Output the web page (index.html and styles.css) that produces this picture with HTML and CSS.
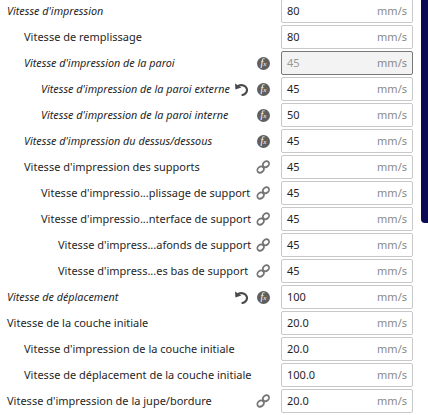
FILE: index.html
```html
<!DOCTYPE html>
<html lang="fr">
  <head>
    <meta charset="UTF-8" />
    <title>Vitesse</title>
    <link rel="stylesheet" href="styles.css">
  </head>
  <body>
    <svg class="defs" width="0" height="0">
      <symbol id="reset" viewBox="0 0 14 14">
        <path d="M1 1.4 L1.4 7.6 L7.4 5.4 Z" fill="#4a4a4a"/>
        <path d="M3 4.8 C6 2.2 11.6 2.6 12.8 6.8 C13.6 10 11.2 12.6 7.6 13.2" fill="none" stroke="#4a4a4a" stroke-width="2.1"/>
      </symbol>
      <symbol id="link" viewBox="0 0 14 14">
        <g fill="none" stroke="#737373" stroke-width="1.7">
          <ellipse cx="4.6" cy="9.6" rx="3.5" ry="2.8" transform="rotate(-40 4.6 9.6)"/>
          <ellipse cx="10" cy="4.2" rx="3.3" ry="2.7" transform="rotate(-40 10 4.2)"/>
        </g>
      </symbol>
    </svg>

    <main class="settings">
      <div class="row">
        <span class="label italic">Vitesse d'impression</span>
        <div class="field"><span>80</span><span class="unit">mm/s</span></div>
      </div>
      <div class="row level-1">
        <span class="label">Vitesse de remplissage</span>
        <div class="field"><span>80</span><span class="unit">mm/s</span></div>
      </div>
      <div class="row level-1">
        <span class="label italic">Vitesse d'impression de la paroi</span>
        <span class="fx"><i>f<small>x</small></i></span>
        <div class="field disabled"><span>45</span><span class="unit">mm/s</span></div>
      </div>
      <div class="row level-2">
        <span class="label italic">Vitesse d'impression de la paroi externe</span>
        <svg class="reset"><use href="#reset"/></svg>
        <span class="fx"><i>f<small>x</small></i></span>
        <div class="field"><span>45</span><span class="unit">mm/s</span></div>
      </div>
      <div class="row level-2">
        <span class="label italic">Vitesse d'impression de la paroi interne</span>
        <span class="fx"><i>f<small>x</small></i></span>
        <div class="field"><span>50</span><span class="unit">mm/s</span></div>
      </div>
      <div class="row level-1">
        <span class="label italic">Vitesse d'impression du dessus/dessous</span>
        <span class="fx"><i>f<small>x</small></i></span>
        <div class="field"><span>45</span><span class="unit">mm/s</span></div>
      </div>
      <div class="row level-1">
        <span class="label">Vitesse d'impression des supports</span>
        <svg class="link"><use href="#link"/></svg>
        <div class="field"><span>45</span><span class="unit">mm/s</span></div>
      </div>
      <div class="row level-2">
        <span class="label">Vitesse d'impressio...plissage de support</span>
        <svg class="link"><use href="#link"/></svg>
        <div class="field"><span>45</span><span class="unit">mm/s</span></div>
      </div>
      <div class="row level-2">
        <span class="label">Vitesse d'impressio...nterface de support</span>
        <svg class="link"><use href="#link"/></svg>
        <div class="field"><span>45</span><span class="unit">mm/s</span></div>
      </div>
      <div class="row level-3">
        <span class="label">Vitesse d'impress...afonds de support</span>
        <svg class="link"><use href="#link"/></svg>
        <div class="field"><span>45</span><span class="unit">mm/s</span></div>
      </div>
      <div class="row level-3">
        <span class="label">Vitesse d'impress...es bas de support</span>
        <svg class="link"><use href="#link"/></svg>
        <div class="field"><span>45</span><span class="unit">mm/s</span></div>
      </div>
      <div class="row">
        <span class="label italic">Vitesse de déplacement</span>
        <svg class="reset"><use href="#reset"/></svg>
        <span class="fx"><i>f<small>x</small></i></span>
        <div class="field"><span>100</span><span class="unit">mm/s</span></div>
      </div>
      <div class="row">
        <span class="label">Vitesse de la couche initiale</span>
        <div class="field"><span>20.0</span><span class="unit">mm/s</span></div>
      </div>
      <div class="row level-1">
        <span class="label">Vitesse d'impression de la couche initiale</span>
        <div class="field"><span>20.0</span><span class="unit">mm/s</span></div>
      </div>
      <div class="row level-1">
        <span class="label">Vitesse de déplacement de la couche initiale</span>
        <div class="field"><span>100.0</span><span class="unit">mm/s</span></div>
      </div>
      <div class="row">
        <span class="label">Vitesse d'impression de la jupe/bordure</span>
        <svg class="link"><use href="#link"/></svg>
        <div class="field"><span>20.0</span><span class="unit">mm/s</span></div>
      </div>
    </main>

    <div class="scrollbar"></div>
  </body>
</html>
```

FILE: styles.css
```css
html {
  height: 100%;
}

body {
  height: 415px;
  margin: 0;
  overflow: hidden;
  position: relative;
  background-color: white;
  font-family: "Noto Sans", sans-serif;
  font-size: 11px;
  color: #1f1f1f;
}

.defs {
  position: absolute;
}

.settings {
  display: flex;
  flex-direction: column;
  gap: 2px;
  width: 413px;
  margin-top: -1px;
}

.row {
  display: flex;
  align-items: center;
  height: 24px;
  padding-left: 7px;
}

.level-1 {
  padding-left: 24px;
}

.level-2 {
  padding-left: 41px;
}

.level-3 {
  padding-left: 58px;
}

.label {
  flex: 1;
  padding-bottom: 2px;
  white-space: nowrap;
}

.italic {
  font-style: italic;
  font-size: 10.8px;
}

.fx {
  display: flex;
  justify-content: center;
  align-items: center;
  width: 13px;
  height: 13px;
  margin-right: 11px;
  border-radius: 50%;
  background-color: #5f5f5f;
  color: white;
  font-family: "Liberation Serif", serif;
  font-size: 10px;
  line-height: 1;
}

.fx small {
  font-size: 7px;
}

.reset {
  width: 14px;
  height: 14px;
  margin-right: 9px;
}

.link {
  width: 14px;
  height: 14px;
  margin-right: 11px;
}

.field {
  box-sizing: border-box;
  display: flex;
  justify-content: space-between;
  align-items: center;
  width: 132px;
  height: 24px;
  padding: 0 5px 2px 5px;
  border: 1px solid #c8c8c8;
  border-radius: 2px;
  font-size: 11px;
}

.unit {
  color: #8a8a8a;
}

.disabled {
  border-color: #777777;
  background-color: #f3f3f3;
  color: #999999;
}

.scrollbar {
  position: absolute;
  top: 0;
  right: 0;
  width: 7px;
  height: 223px;
  border-bottom-left-radius: 4px;
  background-color: #0a0a55;
}
```
